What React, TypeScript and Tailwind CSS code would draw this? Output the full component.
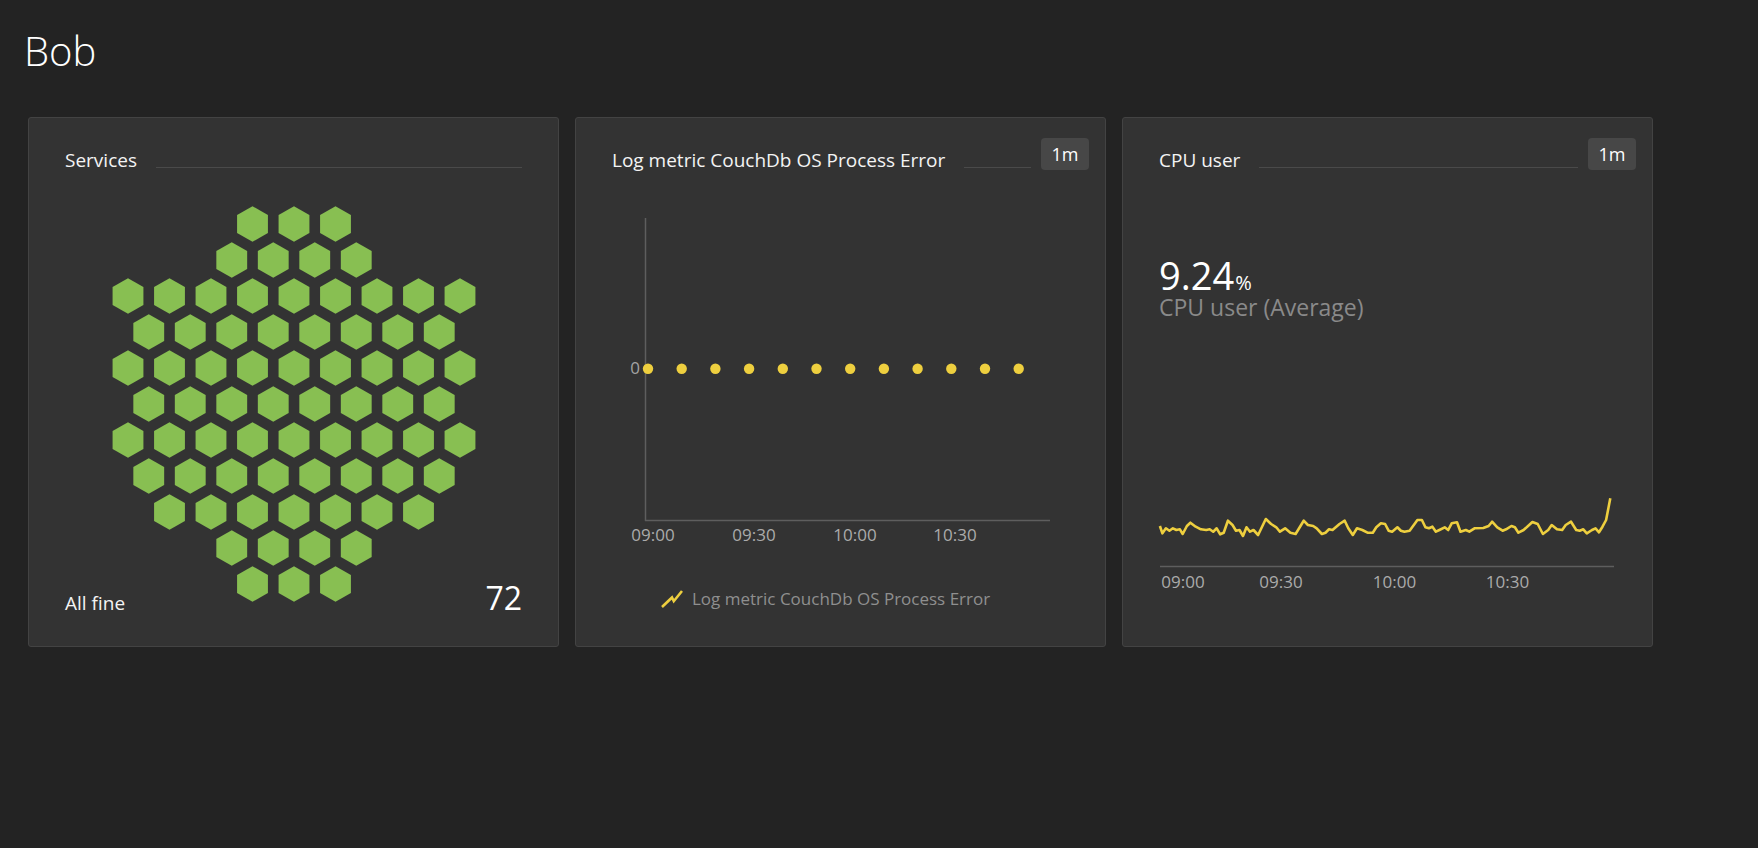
import React from "react";

// hex rows: half-column indices (0..16), one row per 36px
const hexRows: number[][] = [
    [6, 8, 10],
    [5, 7, 9, 11],
    [0, 2, 4, 6, 8, 10, 12, 14, 16],
    [1, 3, 5, 7, 9, 11, 13, 15],
    [0, 2, 4, 6, 8, 10, 12, 14, 16],
    [1, 3, 5, 7, 9, 11, 13, 15],
    [0, 2, 4, 6, 8, 10, 12, 14, 16],
    [1, 3, 5, 7, 9, 11, 13, 15],
    [2, 4, 6, 8, 10, 12, 14],
    [5, 7, 9, 11],
    [6, 8, 10],
];

const cpuRaw: [number, number][] = [
    [128, 258], [135, 280], [145, 265], [155, 272], [165, 265], [175, 270], [185, 268], [193, 282],
    [205, 258], [215, 248], [230, 260], [245, 268], [260, 270], [270, 268], [280, 275], [290, 265],
    [300, 283], [310, 278], [322, 242], [335, 255], [345, 272], [355, 270], [365, 288], [375, 262],
    [385, 275], [395, 270], [408, 285], [430, 237], [445, 252], [460, 262], [470, 275], [485, 265],
    [500, 278], [515, 282], [538, 242], [550, 255], [565, 258], [575, 265], [590, 282], [600, 278],
    [610, 268], [620, 270], [640, 252], [655, 242], [665, 265], [678, 285], [690, 265], [705, 270],
    [720, 278], [735, 278], [745, 262], [758, 250], [770, 252], [780, 272], [790, 275], [805, 262],
    [815, 272], [825, 275], [840, 272], [852, 255], [862, 240], [875, 240], [885, 262], [895, 265],
    [905, 260], [915, 275], [925, 270], [940, 262], [950, 270], [960, 250], [975, 247], [985, 275],
    [1000, 270], [1010, 275], [1025, 265], [1050, 264], [1065, 258], [1075, 245], [1090, 262],
    [1105, 272], [1115, 268], [1130, 258], [1140, 262], [1150, 278], [1165, 270], [1190, 246],
    [1205, 252], [1220, 282], [1235, 270], [1245, 255], [1260, 268], [1275, 270], [1285, 255],
    [1300, 245], [1315, 270], [1325, 272], [1335, 268], [1345, 280], [1360, 270], [1370, 265],
    [1380, 277], [1390, 260], [1400, 240], [1412, 175],
];

const cpuPoints = cpuRaw
    .map(([x, y]) => `${(x / 2.851 - 8).toFixed(1)},${(y / 3 - 40).toFixed(1)}`)
    .join(" ");

function hexPoints(cx: number, cy: number, r: number) {
    const pts: string[] = [];
    for (let i = 0; i < 6; i++) {
        const a = (Math.PI / 3) * i - Math.PI / 2;
        pts.push(`${(cx + r * Math.cos(a)).toFixed(2)},${(cy + r * Math.sin(a)).toFixed(2)}`);
    }
    return pts.join(" ");
}

function CardHeader({ title, badge }: { title: string; badge?: boolean }) {
    return (
        <div className={`flex items-start pt-[20px] pl-[36px] ${badge ? "pr-[16px]" : "pr-[36px]"}`}>
            <span className="mt-[10px] text-[19px] leading-[24px] text-[#f4f4f4] whitespace-nowrap">{title}</span>
            <div className="flex-1 mt-[29px] ml-[19px] h-px bg-[#4a4a4a]" />
            {badge && (
                <div className="ml-[10px] w-[48px] h-[32px] rounded-[4px] bg-[#474747] flex items-center justify-center text-[18px] text-white">
                    1m
                </div>
            )}
        </div>
    );
}

function ServicesCard() {
    const step = 20.75;
    const r = 17.8;
    return (
        <div className="w-[531px] h-[530px] rounded-[3px] border border-[#434343] bg-[#333333] flex flex-col">
            <CardHeader title="Services" />
            <div className="grid flex-1">
                <svg
                    className="col-start-1 row-start-1 mx-auto mt-[34px]"
                    width={364}
                    height={396}
                    viewBox="0 0 364 396"
                >
                    {hexRows.map((row, ri) =>
                        row.map(k => (
                            <polygon
                                key={`${ri}-${k}`}
                                points={hexPoints(16 + k * step, 18 + ri * 36, r)}
                                fill="#88bf52"
                            />
                        ))
                    )}
                </svg>
                <div className="col-start-1 row-start-1 self-end flex items-baseline justify-between px-[36px] pb-[30px]">
                    <span className="text-[19px] leading-[24px] text-[#f4f4f4]">All fine</span>
                    <span className="text-[32px] leading-[36px] text-white">72</span>
                </div>
            </div>
        </div>
    );
}

function LogMetricCard() {
    const dots = Array.from({ length: 12 }, (_, i) => 72 + i * 33.7);
    const labels = [
        { x: 77, t: "09:00" },
        { x: 178, t: "09:30" },
        { x: 279, t: "10:00" },
        { x: 379, t: "10:30" },
    ];
    return (
        <div className="w-[531px] h-[530px] rounded-[3px] border border-[#434343] bg-[#333333] flex flex-col">
            <CardHeader title="Log metric CouchDb OS Process Error" badge />
            <svg width={529} height={380} viewBox="0 0 529 380" className="block">
                <line x1={69.5} y1={46} x2={69.5} y2={349} stroke="#5e5e5e" strokeWidth={1.5} />
                <line x1={69} y1={348.5} x2={474} y2={348.5} stroke="#5e5e5e" strokeWidth={1.5} />
                <text x={64} y={202} textAnchor="end" fontSize={17} fill="#a3a3a3" fontFamily="'Open Sans', sans-serif">
                    0
                </text>
                {dots.map((cx, i) => (
                    <circle key={i} cx={cx} cy={196.7} r={5.2} fill="#eecf3f" />
                ))}
                {labels.map(l => (
                    <text
                        key={l.t}
                        x={l.x}
                        y={369}
                        textAnchor="middle"
                        fontSize={17}
                        fill="#ababab"
                        fontFamily="'Open Sans', sans-serif"
                    >
                        {l.t}
                    </text>
                ))}
            </svg>
            <div className="mt-[35px] pl-[85px] flex items-center gap-[9px]">
                <svg width={22} height={18} viewBox="0 0 22 18">
                    <polyline
                        points="1,17 11,7.5 12.8,11.2 21,1"
                        fill="none"
                        stroke="#eecf3f"
                        strokeWidth={2.6}
                        strokeLinejoin="miter"
                    />
                </svg>
                <span className="text-[17px] leading-[24px] text-[#8f8f8f] whitespace-nowrap">
                    Log metric CouchDb OS Process Error
                </span>
            </div>
        </div>
    );
}

function CpuCard() {
    const labels = [
        { x: 60, t: "09:00" },
        { x: 158, t: "09:30" },
        { x: 271.5, t: "10:00" },
        { x: 384.5, t: "10:30" },
    ];
    return (
        <div className="w-[531px] h-[530px] rounded-[3px] border border-[#434343] bg-[#333333] flex flex-col">
            <CardHeader title="CPU user" badge />
            <div className="pl-[36px] mt-[86px]">
                <div className="flex items-baseline text-white h-[36px]">
                    <span className="text-[38px] leading-[34px]">9.24</span>
                    <span className="text-[20px] leading-[20px] ml-[1px]">%</span>
                </div>
                <div className="text-[23px] leading-[26px] text-[#8a8a8a]">CPU user (Average)</div>
            </div>
            <svg width={529} height={120} viewBox="0 0 529 120" className="block mt-[160px]">
                <polyline
                    points={cpuPoints}
                    fill="none"
                    stroke="#eecf3f"
                    strokeWidth={2.6}
                    strokeLinejoin="round"
                />
                <line x1={37} y1={86.5} x2={491} y2={86.5} stroke="#5e5e5e" strokeWidth={1.5} />
                {labels.map(l => (
                    <text
                        key={l.t}
                        x={l.x}
                        y={108}
                        textAnchor="middle"
                        fontSize={17}
                        fill="#ababab"
                        fontFamily="'Open Sans', sans-serif"
                    >
                        {l.t}
                    </text>
                ))}
            </svg>
        </div>
    );
}

export default function App() {
    return (
        <div className="min-h-screen w-full bg-[#232323] font-['Open_Sans',sans-serif]">
            <h1 className="pt-[27px] pl-[24px] text-[40px] leading-[48px] font-light text-white">Bob</h1>
            <div className="mt-[42px] px-[28px] flex gap-[16px]">
                <ServicesCard />
                <LogMetricCard />
                <CpuCard />
            </div>
        </div>
    );
}
